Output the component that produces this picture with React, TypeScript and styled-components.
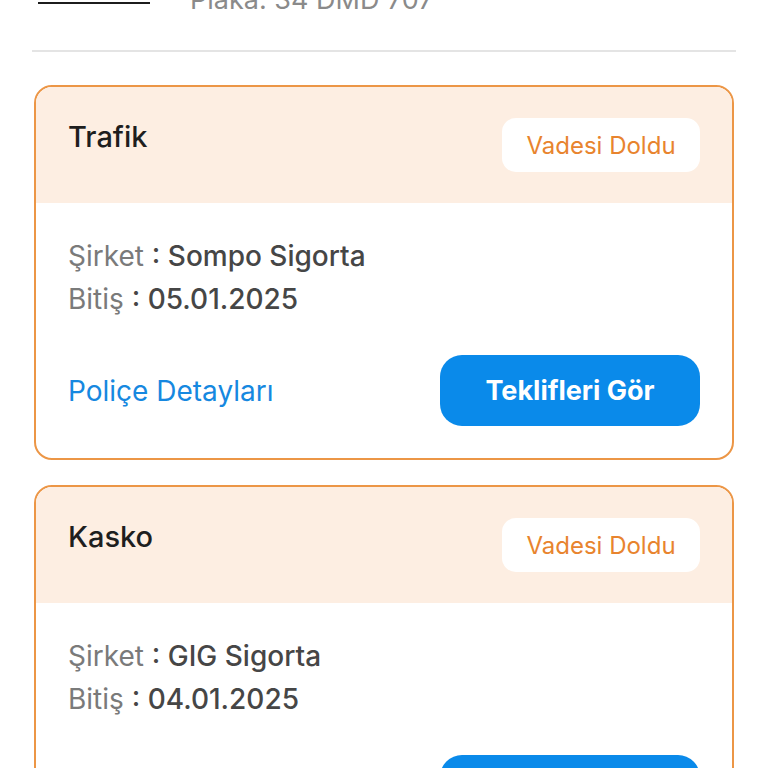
import styled, { createGlobalStyle } from "styled-components";

const GlobalStyle = createGlobalStyle`
  html, body {
    margin: 0;
    padding: 0;
    background: #ffffff;
    overflow: hidden;
  }
  body {
    font-family: Inter, "Noto Sans", sans-serif;
  }
`;

const Page = styled.div`
  width: 768px;
  height: 768px;
  overflow: hidden;
  padding: 0 34px;
  box-sizing: border-box;
`;

const VehicleRow = styled.div`
  display: flex;
  align-items: flex-end;
  gap: 40px;
  margin-top: -18px;
  height: 36px;
  padding-left: 4px;
`;

const EditLink = styled.span`
  display: inline-block;
  width: 112px;
  height: 20px;
  border-bottom: 2px solid #1c1c1c;
  margin-bottom: 14px;
`;

const Plate = styled.span`
  font-size: 27px;
  line-height: 36px;
  color: #8a8a8a;
`;

const Divider = styled.div`
  height: 2px;
  background: #e4e4e4;
  margin: 32px -2px 33px;
`;

const CardList = styled.div`
  display: flex;
  flex-direction: column;
  gap: 25px;
`;

const Card = styled.div`
  border: 2px solid #ec9646;
  border-radius: 18px;
  overflow: hidden;
  background: #ffffff;
`;

const CardHeader = styled.div`
  display: flex;
  justify-content: space-between;
  align-items: flex-start;
  background: #fdeee2;
  padding: 31px 32px 31px 32px;
`;

const CardTitle = styled.h2`
  margin: 0;
  font-size: 29px;
  line-height: 38px;
  font-weight: 500;
  color: #1e1e1e;
`;

const StatusBadge = styled.span`
  display: flex;
  align-items: center;
  justify-content: center;
  width: 198px;
  height: 54px;
  border-radius: 14px;
  background: #ffffff;
  color: #e8842e;
  font-size: 24px;
`;

const CardBody = styled.div`
  padding: 32px 32px 32px;
`;

const InfoLine = styled.div`
  font-size: 28px;
  line-height: 43px;
  color: #7a7a7a;
`;

const InfoValue = styled.span`
  color: #464646;
  font-weight: 500;
`;

const Actions = styled.div`
  display: flex;
  justify-content: space-between;
  align-items: center;
  margin-top: 34px;
`;

const DetailsLink = styled.a`
  font-size: 28px;
  color: #1688e0;
  text-decoration: none;
`;

const OffersButton = styled.button`
  width: 260px;
  height: 71px;
  border: none;
  border-radius: 22px;
  background: #0a8aea;
  color: #ffffff;
  font-family: Inter, "Noto Sans", sans-serif;
  font-size: 27px;
  font-weight: 700;
`;

type Policy = {
  type: string;
  company: string;
  endDate: string;
};

const policies: Policy[] = [
  { type: "Trafik", company: "Sompo Sigorta", endDate: "05.01.2025" },
  { type: "Kasko", company: "GIG Sigorta", endDate: "04.01.2025" },
];

const PolicyCard = ({ policy }: { policy: Policy }) => (
  <Card>
    <CardHeader>
      <CardTitle>{policy.type}</CardTitle>
      <StatusBadge>Vadesi Doldu</StatusBadge>
    </CardHeader>
    <CardBody>
      <InfoLine>
        Şirket <InfoValue>: {policy.company}</InfoValue>
      </InfoLine>
      <InfoLine>
        Bitiş <InfoValue>: {policy.endDate}</InfoValue>
      </InfoLine>
      <Actions>
        <DetailsLink>Poliçe Detayları</DetailsLink>
        <OffersButton>Teklifleri Gör</OffersButton>
      </Actions>
    </CardBody>
  </Card>
);

const App = () => {
  return (
    <>
      <GlobalStyle />
      <Page>
        <VehicleRow>
          <EditLink />
          <Plate>Plaka: 34 DMD 707</Plate>
        </VehicleRow>
        <Divider />
        <CardList>
          {policies.map((p) => (
            <PolicyCard key={p.type} policy={p} />
          ))}
        </CardList>
      </Page>
    </>
  );
};

export default App;
